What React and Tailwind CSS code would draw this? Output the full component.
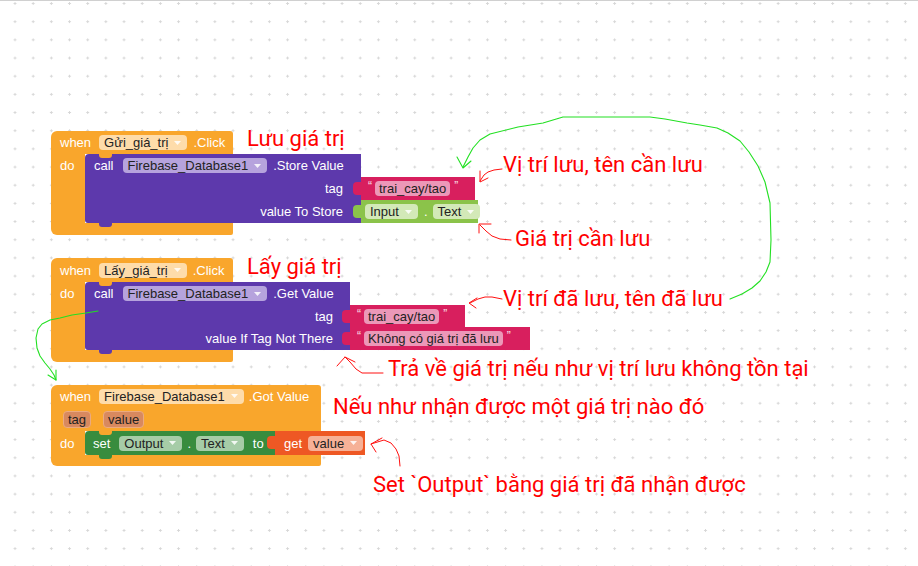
import React from 'react';

const font = "font-['Liberation_Sans',Arial,sans-serif]";

function Caret() {
  return (
    <svg width="7" height="4" viewBox="0 0 7 4" className="ml-[6px]">
      <path d="M0 0h7L3.5 4z" fill="#fff" fillOpacity="0.85" />
    </svg>
  );
}

function Pill({ label, bg, arrow = true }) {
  return (
    <span
      className={`inline-flex h-[15px] items-center rounded-[4px] leading-none text-[#222] ${
        arrow ? 'pl-[5px] pr-[6px]' : 'px-[4px]'
      } ${bg}`}
    >
      {label}
      {arrow && <Caret />}
    </span>
  );
}

// puzzle tab on the left of a value block
function Tab({ color }) {
  return <span className={`absolute left-[-8px] top-[5px] h-[13px] w-[8px] rounded-l-[4px] ${color}`} />;
}

function TextBlock({ text, w, h = 'h-[23px]' }) {
  return (
    <div className={`relative flex items-center bg-[#D81F5E] pl-[7px] ${h} ${w}`}>
      <Tab color="bg-[#D81F5E]" />
      <span className="self-start pt-[3px] text-[12px] text-white/85">“</span>
      <span className="ml-[3px]">
        <Pill label={text} bg="bg-[#EC98B8]" arrow={false} />
      </span>
      <span className="ml-[4px] self-start pt-[3px] text-[12px] text-white/85">”</span>
    </div>
  );
}

function GridBg() {
  return (
    <svg className="absolute inset-0" width="918" height="566">
      <defs>
        <pattern id="grid" x="5.92" y="12.6" width="18.17" height="18.17" patternUnits="userSpaceOnUse">
          <path d="M7.6 9.1h3M9.1 7.6v3" stroke="#d7d7d7" strokeWidth="1" />
        </pattern>
      </defs>
      <rect width="918" height="566" fill="url(#grid)" />
    </svg>
  );
}

function Notches({ top, bottom }) {
  return (
    <>
      <span className={`absolute left-[14px] top-0 h-[4px] w-[13px] rounded-b-[3px] ${top}`} />
      <span className={`absolute bottom-[-4px] left-[14px] h-[4px] w-[13px] rounded-b-[3px] ${bottom}`} />
    </>
  );
}

function Arrows() {
  return (
    <svg className="pointer-events-none absolute inset-0" width="918" height="566" fill="none">
      {/* green */}
      <g stroke="#22e022" strokeWidth="1.1" strokeLinejoin="round" strokeLinecap="round">
        <polyline points="730,299 742,294 752,288 760,281 766,272 770,262 771,240 770,203 765,182 758,166 749,152 740,141 728,133 717,128 700,125 687,123 665,119 650,117 600,117 563,117 543,123 518,127 490,134 480,140 473,148 468,157 463,167" />
        <polyline points="457,157 463,168 471,161" />
        <polyline points="98,311 86,313 72,315 60,318 50,320 42,324 38,329 36,338 37,348 40,356 45,363 50,369 54,375 56,380" />
        <polyline points="56,370 56,380 48,375" />
      </g>
      {/* red */}
      <g stroke="#ff1010" strokeWidth="1" strokeLinejoin="round" strokeLinecap="round">
        <polyline points="502,169 494,170 488,172 484,175 480,181" />
        <polyline points="480,171 480,182 488,178" />
        <polyline points="511,240 500,239 492,236 486,231 480,225" />
        <polyline points="491,224 479,224 479,233" />
        <polyline points="502,299 492,297 485,297 478,299 470,303" />
        <polyline points="477,298 469,303 476,308" />
        <polyline points="383,373 362,373 356,369 350,362 345,357" />
        <polyline points="337,366 345,357 355,362" />
        <polyline points="400,466 399,456 396,449 391,443 384,440 371,444" />
        <polyline points="382,438 371,444 376,452" />
      </g>
    </svg>
  );
}

const note = "absolute whitespace-nowrap font-['Roboto',sans-serif] text-[22px] leading-none text-[#ff0000]";

export default function App() {
  return (
    <div className="relative h-[566px] w-[918px] overflow-hidden bg-white">
      <GridBg />
      <div className="absolute left-0 right-0 top-0 h-px bg-[#d0d0d0]" />

      {/* when Gửi_giá_trị.Click */}
      <div className={`absolute left-[51px] top-[131px] flex flex-col items-start text-[13px] leading-none text-white ${font}`}>
        <div className="flex h-[23px] w-[182px] items-center rounded-tl-[6px] rounded-tr-[3px] bg-[#F9A62C] pl-[9px]">
          <span>when</span>
          <span className="ml-[8px]">
            <Pill label="Gửi_giá_trị" bg="bg-[#FEDCAA]" />
          </span>
          <span className="ml-[6px]">.Click</span>
        </div>
        <div className="flex">
          <div className="w-[34px] bg-[#F9A62C] pl-[9px] pt-[5px]">do</div>
          <div className="relative flex flex-col">
            <div className="flex h-[23px] w-[276px] items-center rounded-tl-[4px] bg-[#5D39AC] pl-[9px]">
              <span>call</span>
              <span className="ml-[9px]">
                <Pill label="Firebase_Database1" bg="bg-[#B6A3DD]" />
              </span>
              <span className="ml-[6px]">.Store Value</span>
            </div>
            <div className="flex">
              <div className="flex h-[23px] w-[276px] items-center justify-end bg-[#5D39AC] pr-[18px]">tag</div>
              <TextBlock text="trai_cay/tao" w="w-[114px]" />
            </div>
            <div className="flex">
              <div className="flex h-[23px] w-[276px] items-center justify-end rounded-bl-[3px] bg-[#5D39AC] pr-[18px]">
                value To Store
              </div>
              <div className="relative flex h-[23px] w-[117px] items-center bg-[#8BC34A] pl-[4px]">
                <Tab color="bg-[#8BC34A]" />
                <Pill label="Input" bg="bg-[#D3E9B8]" />
                <span className="ml-[6px]">.</span>
                <span className="ml-[5px]">
                  <Pill label="Text" bg="bg-[#D3E9B8]" />
                </span>
              </div>
            </div>
            <Notches top="bg-[#F9A62C]" bottom="bg-[#5D39AC]" />
          </div>
        </div>
        <div className="h-[12px] w-[182px] rounded-b-[6px] rounded-br-[2px] bg-[#F9A62C]" />
      </div>

      {/* when Lấy_giá_trị.Click */}
      <div className={`absolute left-[51px] top-[258px] flex flex-col items-start text-[13px] leading-none text-white ${font}`}>
        <div className="flex h-[24px] w-[182px] items-center rounded-tl-[6px] rounded-tr-[3px] bg-[#F9A62C] pl-[9px]">
          <span>when</span>
          <span className="ml-[8px]">
            <Pill label="Lấy_giá_trị" bg="bg-[#FEDCAA]" />
          </span>
          <span className="ml-[6px]">.Click</span>
        </div>
        <div className="flex">
          <div className="w-[34px] bg-[#F9A62C] pl-[9px] pt-[5px]">do</div>
          <div className="relative flex flex-col">
            <div className="flex h-[23px] w-[265px] items-center rounded-tl-[4px] bg-[#5D39AC] pl-[9px]">
              <span>call</span>
              <span className="ml-[9px]">
                <Pill label="Firebase_Database1" bg="bg-[#B6A3DD]" />
              </span>
              <span className="ml-[6px]">.Get Value</span>
            </div>
            <div className="flex">
              <div className="flex h-[22px] w-[265px] items-center justify-end bg-[#5D39AC] pr-[17px]">tag</div>
              <TextBlock text="trai_cay/tao" w="w-[115px]" h="h-[22px]" />
            </div>
            <div className="flex">
              <div className="flex h-[23px] w-[265px] items-center justify-end rounded-bl-[3px] bg-[#5D39AC] pr-[17px]">
                value If Tag Not There
              </div>
              <TextBlock text="Không có giá trị đã lưu" w="w-[180px]" />
            </div>
            <Notches top="bg-[#F9A62C]" bottom="bg-[#5D39AC]" />
          </div>
        </div>
        <div className="h-[12px] w-[182px] rounded-b-[6px] rounded-br-[2px] bg-[#F9A62C]" />
      </div>

      {/* when Firebase_Database1.Got Value */}
      <div className={`absolute left-[51px] top-[385px] flex flex-col items-start text-[13px] leading-none text-white ${font}`}>
        <div className="flex h-[22px] w-[270px] items-center rounded-tl-[6px] rounded-tr-[3px] bg-[#F9A62C] pl-[9px]">
          <span>when</span>
          <span className="ml-[8px]">
            <Pill label="Firebase_Database1" bg="bg-[#FEDCAA]" />
          </span>
          <span className="ml-[5px]">.Got Value</span>
        </div>
        <div className="flex h-[24px] w-[270px] items-center gap-[12px] bg-[#F9A62C] pl-[12px]">
          <span className="inline-flex h-[17px] items-center rounded-[4px] border border-[#EBAA80] bg-[#D8895F] px-[4px] text-[#222]">
            tag
          </span>
          <span className="inline-flex h-[17px] items-center rounded-[4px] border border-[#EBAA80] bg-[#D8895F] px-[4px] text-[#222]">
            value
          </span>
        </div>
        <div className="flex">
          <div className="w-[34px] bg-[#F9A62C] pl-[9px] pt-[6px]">do</div>
          <div className="relative flex h-[24px] w-[190px] items-center rounded-tl-[4px] rounded-bl-[3px] bg-[#388C3E] pl-[8px]">
            <span>set</span>
            <span className="ml-[9px]">
              <Pill label="Output" bg="bg-[#A6CCA7]" />
            </span>
            <span className="ml-[5px]">.</span>
            <span className="ml-[5px]">
              <Pill label="Text" bg="bg-[#A6CCA7]" />
            </span>
            <span className="ml-[9px]">to</span>
            <Notches top="bg-[#F9A62C]" bottom="bg-[#388C3E]" />
          </div>
          <div className="relative flex h-[24px] w-[90px] items-center bg-[#EE5824] pl-[9px]">
            <Tab color="bg-[#EE5824]" />
            <span>get</span>
            <span className="ml-[6px]">
              <Pill label="value" bg="bg-[#F6B197]" />
            </span>
          </div>
        </div>
        <div className="h-[11px] w-[270px] rounded-b-[6px] rounded-br-[2px] bg-[#F9A62C]" />
      </div>

      {/* annotations */}
      <div className={`${note} left-[247px] top-[128px]`}>Lưu giá trị</div>
      <div className={`${note} left-[503px] top-[154px]`}>Vị trí lưu, tên cần lưu</div>
      <div className={`${note} left-[515px] top-[228px]`}>Giá trị cần lưu</div>
      <div className={`${note} left-[247px] top-[256px]`}>Lấy giá trị</div>
      <div className={`${note} left-[503px] top-[288px]`}>Vị trí đã lưu, tên đã lưu</div>
      <div className={`${note} left-[388px] top-[358px]`}>Trả về giá trị nếu như vị trí lưu không tồn tại</div>
      <div className={`${note} left-[333px] top-[396px]`}>Nếu như nhận được một giá trị nào đó</div>
      <div className={`${note} left-[373px] top-[474px]`}>Set `Output` bằng giá trị đã nhận được</div>

      <Arrows />
    </div>
  );
}
